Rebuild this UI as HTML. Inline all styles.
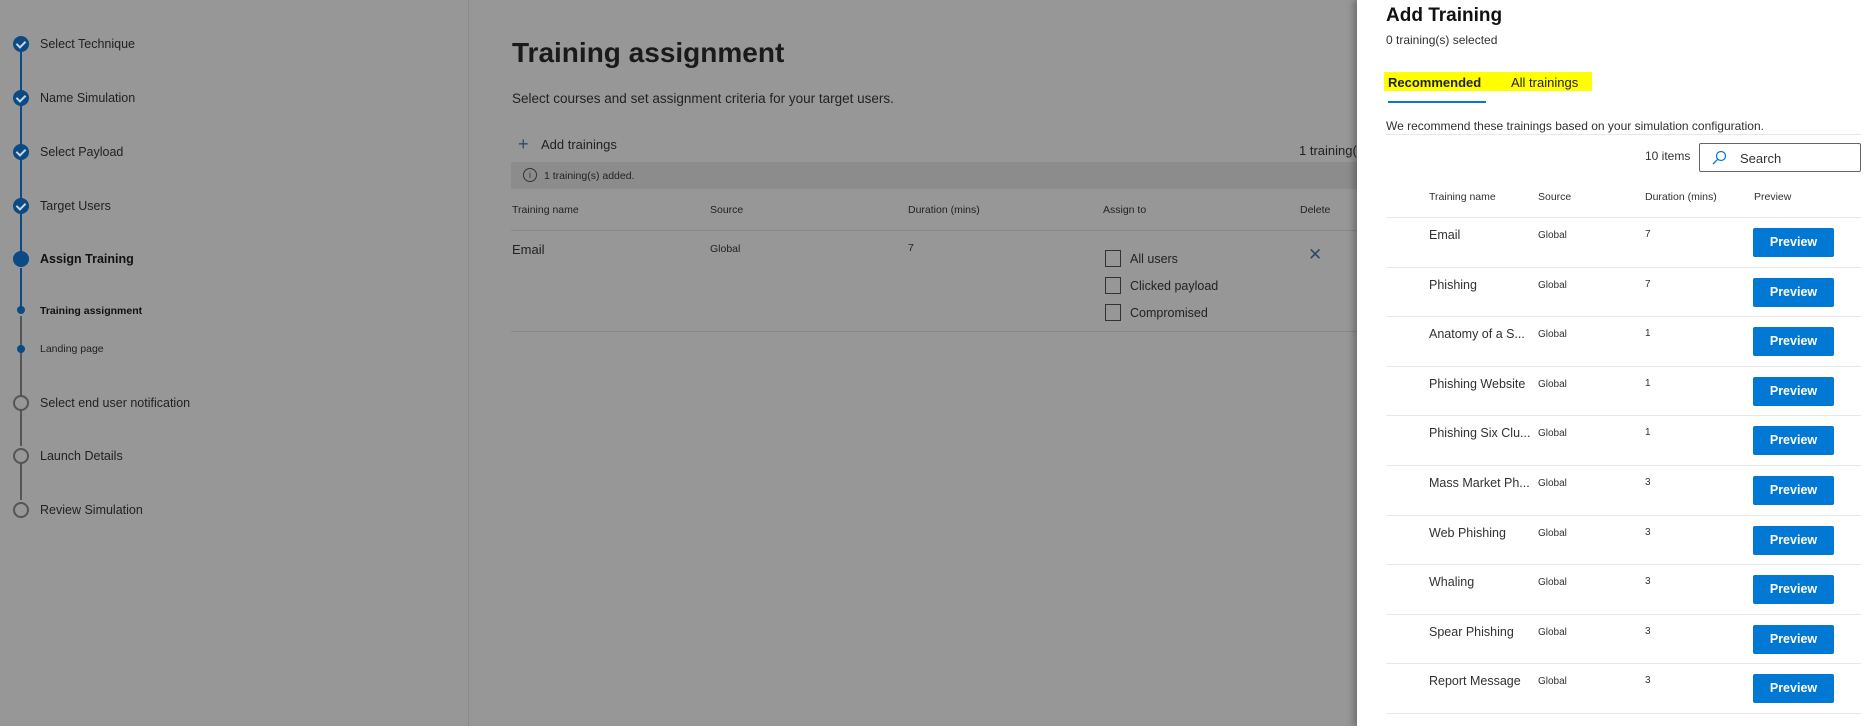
<!DOCTYPE html>
<html><head><meta charset="utf-8"><style>
*{margin:0;padding:0;box-sizing:border-box}
body{width:1869px;height:726px;overflow:hidden;background:#979797;font-family:"Liberation Sans",sans-serif;color:#1f1f1f;position:relative}
.a{position:absolute;white-space:nowrap}
.st{font-size:12.5px;color:#222}
.vl{position:absolute;width:2px;left:20px}
.c{position:absolute;left:13px;width:16px;height:16px;border-radius:50%}
.done{background:#0a4a85}
.done:after{content:"";position:absolute;left:5px;top:3px;width:4px;height:7px;border:solid #c9d6e2;border-width:0 2px 2px 0;transform:rotate(45deg)}
.open{border:2px solid #555;background:transparent}
.cb{position:absolute;left:1105px;width:16px;height:17px;border:1px solid #333}
.p{position:absolute;left:1357px;top:0;width:512px;height:726px;background:#fff;box-shadow:-4px 0 6px rgba(0,0,0,.25)}
.p .a{color:#323130}
.hl{position:absolute;left:29px;right:8px;height:1px;background:#e8e8e8}
.btn{position:absolute;left:396px;width:81px;height:29px;background:#0078d4;border-radius:2px;color:#fff;font-weight:bold;font-size:12.5px;text-align:center;line-height:29px}
</style></head><body>
<div class="vl" style="top:52px;height:200px;background:#0a4a85"></div>
<div class="vl" style="top:268px;height:42px;background:#0a4a85"></div>
<div class="vl" style="top:316px;height:80px;background:#555"></div>
<div class="vl" style="top:410px;height:36px;background:#555"></div>
<div class="vl" style="top:464px;height:36px;background:#555"></div>
<div class="c done" style="top:36px"></div>
<div class="c done" style="top:90px"></div>
<div class="c done" style="top:144px"></div>
<div class="c done" style="top:198px"></div>
<div class="c" style="top:251px;background:#0a4a85"></div>
<div class="c" style="top:306px;left:17px;width:8px;height:8px;background:#0a4a85"></div>
<div class="c" style="top:345px;left:17px;width:8px;height:8px;background:#0a4a85"></div>
<div class="c open" style="top:395px"></div>
<div class="c open" style="top:448px"></div>
<div class="c open" style="top:502px"></div>
<div class="a st" style="left:40px;top:37px">Select Technique</div>
<div class="a st" style="left:40px;top:91px">Name Simulation</div>
<div class="a st" style="left:40px;top:145px">Select Payload</div>
<div class="a st" style="left:40px;top:199px">Target Users</div>
<div class="a st" style="left:40px;top:252px;font-weight:bold;color:#111">Assign Training</div>
<div class="a st" style="left:40px;top:305px;font-size:10.5px;font-weight:bold;color:#111">Training assignment</div>
<div class="a st" style="left:40px;top:343px;font-size:10.5px">Landing page</div>
<div class="a st" style="left:40px;top:396px">Select end user notification</div>
<div class="a st" style="left:40px;top:449px">Launch Details</div>
<div class="a st" style="left:40px;top:503px">Review Simulation</div>
<div style="position:absolute;left:468px;top:0;width:1px;height:726px;background:#8a8a8a"></div>
<div class="a" style="left:512px;top:37px;font-size:28px;font-weight:bold;color:#1a1a1a">Training assignment</div>
<div class="a" style="left:512px;top:91px;font-size:13.5px;color:#222">Select courses and set assignment criteria for your target users.</div>
<div class="a" style="left:518px;top:134px;font-size:18px;color:#2d4a6a;font-weight:300">+</div>
<div class="a" style="left:541px;top:137px;font-size:13px;color:#222">Add trainings</div>
<div class="a" style="left:1299px;top:143px;font-size:13px;color:#222">1 training(</div>
<div style="position:absolute;left:511px;top:162px;width:846px;height:27px;background:#8c8c8c"></div>
<div class="a" style="left:523px;top:168px;width:14px;height:14px;border:1px solid #333;border-radius:50%;font-size:9px;text-align:center;line-height:12px;color:#333">i</div>
<div class="a" style="left:544px;top:170px;font-size:10.5px;color:#222">1 training(s) added.</div>
<div class="a" style="left:512px;top:204px;font-size:10.5px;color:#222">Training name</div>
<div class="a" style="left:710px;top:204px;font-size:10.5px;color:#222">Source</div>
<div class="a" style="left:908px;top:204px;font-size:10.5px;color:#222">Duration (mins)</div>
<div class="a" style="left:1103px;top:204px;font-size:10.5px;color:#222">Assign to</div>
<div class="a" style="left:1300px;top:204px;font-size:10.5px;color:#222">Delete</div>
<div style="position:absolute;left:511px;top:230px;width:846px;height:1px;background:#888"></div>
<div class="a" style="left:512px;top:242px;font-size:13px;color:#222">Email</div>
<div class="a" style="left:710px;top:243px;font-size:10.5px;color:#222">Global</div>
<div class="a" style="left:908px;top:242px;font-size:10.5px;color:#222">7</div>
<div class="cb" style="top:250px"></div><div class="a" style="left:1130px;top:252px;font-size:12.5px;color:#222">All users</div>
<div class="cb" style="top:277px"></div><div class="a" style="left:1130px;top:279px;font-size:12.5px;color:#222">Clicked payload</div>
<div class="cb" style="top:304px"></div><div class="a" style="left:1130px;top:306px;font-size:12.5px;color:#222">Compromised</div>
<div class="a" style="left:1308px;top:245px;font-size:17px;color:#2d4a6a">✕</div>
<div style="position:absolute;left:511px;top:331px;width:846px;height:1px;background:#888"></div>
<div class="p">
<div class="a" style="left:29px;top:5px;font-size:19px;font-weight:bold;color:#111">Add Training</div>
<div class="a" style="left:29px;top:33px;font-size:12px">0 training(s) selected</div>
<div style="position:absolute;left:27px;top:72px;width:208px;height:19px;background:#ffff00"></div>
<div class="a" style="left:31px;top:75px;font-size:13px;font-weight:bold;color:#222">Recommended</div>
<div class="a" style="left:154px;top:75px;font-size:13px;color:#222">All trainings</div>
<div style="position:absolute;left:31px;top:101px;width:98px;height:2px;background:#0078d4"></div>
<div class="a" style="left:29px;top:119px;font-size:12px">We recommend these trainings based on your simulation configuration.</div>
<div class="hl" style="top:134px"></div>
<div class="a" style="left:288px;top:149px;font-size:12px">10 items</div>
<div style="position:absolute;left:342px;top:143px;width:162px;height:29px;border:1px solid #666;border-radius:2px"></div>
<svg class="a" style="left:354px;top:150px" width="16" height="16" viewBox="0 0 16 16"><circle cx="10" cy="6" r="4.5" fill="none" stroke="#0078d4" stroke-width="1.2"/><path d="M6.8 9.2 2 14" stroke="#0078d4" stroke-width="1.3"/></svg>
<div class="a" style="left:383px;top:151px;font-size:13px">Search</div>
<div class="a" style="left:72px;top:191px;font-size:10.5px">Training name</div>
<div class="a" style="left:181px;top:191px;font-size:10.5px">Source</div>
<div class="a" style="left:288px;top:191px;font-size:10.5px">Duration (mins)</div>
<div class="a" style="left:397px;top:191px;font-size:10.5px">Preview</div>
<div class="hl" style="top:217px"></div>
<div id="rows"></div>
</div>
<script>
var n=[["Email",7],["Phishing",7],["Anatomy of a S...",1],["Phishing Website",1],["Phishing Six Clu...",1],["Mass Market Ph...",3],["Web Phishing",3],["Whaling",3],["Spear Phishing",3],["Report Message",3]];
var h="";n.forEach(function(r,i){var t=217+i*49.6;
h+='<div class="a" style="left:72px;top:'+(t+11)+'px;font-size:12.5px">'+r[0]+'</div>';
h+='<div class="a" style="left:181px;top:'+(t+13)+'px;font-size:10px">Global</div>';
h+='<div class="a" style="left:288px;top:'+(t+12)+'px;font-size:10px">'+r[1]+'</div>';
h+='<div class="btn" style="top:'+(t+11)+'px">Preview</div>';
h+='<div class="hl" style="top:'+(t+49.6)+'px"></div>';});
document.getElementById("rows").outerHTML=h;
</script>
</body></html>
